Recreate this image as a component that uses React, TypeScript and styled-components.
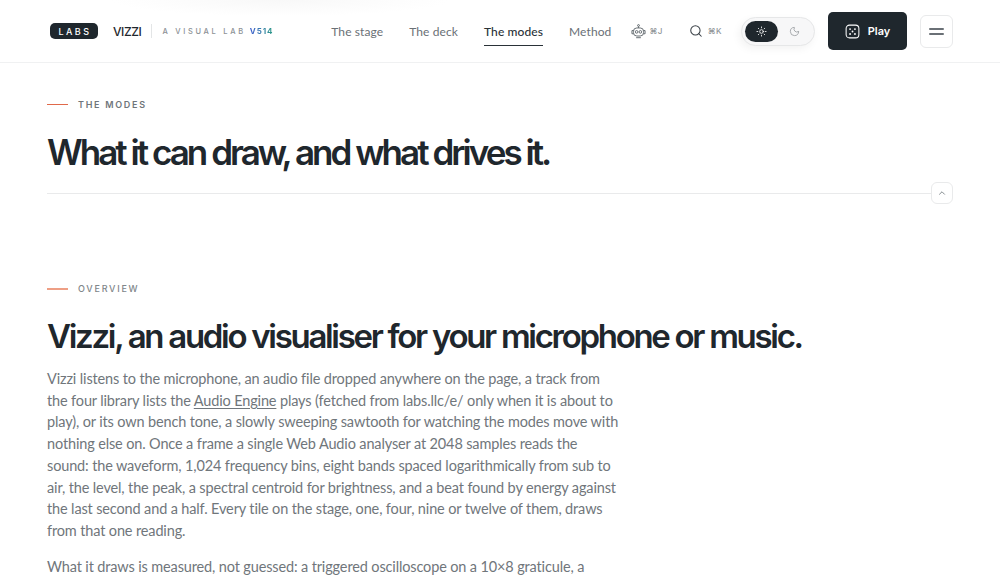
import styled, { createGlobalStyle } from "styled-components";
import { Search, Sun, Moon, ChevronUp } from "lucide-react";

const GlobalStyle = createGlobalStyle`
  * { box-sizing: border-box; }
  html, body { margin: 0; height: 100%; overflow: hidden; background: #fff; }
  body { font-family: Inter, "Liberation Sans", sans-serif; color: #1f272d; }
`;

const navItems = ["The stage", "The deck", "The modes", "Method"];

const BotIcon = () => (
  <svg width="15" height="15" viewBox="0 0 16 16" fill="none" stroke="#5f666c" strokeWidth="1">
    <circle cx="8" cy="1.6" r="1" />
    <path d="M8 2.6v1.6" />
    <rect x="2.6" y="4.2" width="10.8" height="8.6" rx="3.6" />
    <path d="M2.6 7H1v3.4h1.6M13.4 7H15v3.4h-1.6M5.5 14.6h5" />
    <circle cx="6" cy="8.4" r="1.4" />
    <circle cx="10" cy="8.4" r="1.4" />
  </svg>
);

const DiceIcon = () => (
  <svg width="15" height="15" viewBox="0 0 16 16" fill="none">
    <rect x="1.2" y="1.2" width="13.6" height="13.6" rx="3.6" stroke="#fff" strokeWidth="1.1" />
    <g fill="#fff">
      <circle cx="5.4" cy="5.4" r="1" />
      <circle cx="10.6" cy="5.4" r="1" />
      <circle cx="8" cy="8" r="1" />
      <circle cx="5.4" cy="10.6" r="1" />
      <circle cx="10.6" cy="10.6" r="1" />
    </g>
  </svg>
);

export default function App() {
  return (
    <>
      <GlobalStyle />
      <Page>
        <Header>
          <Brand>
            <LabsBadge>LABS</LabsBadge>
            <BrandName>VIZZI</BrandName>
            <BrandDivider />
            <Tagline>A VISUAL LAB</Tagline>
            <Version>V514</Version>
          </Brand>
          <Nav>
            {navItems.map((item) => (
              <NavLink key={item} $active={item === "The modes"}>
                {item}
              </NavLink>
            ))}
          </Nav>
          <Tools>
            <ToolHint>
              <BotIcon />
              <Kbd>⌘J</Kbd>
            </ToolHint>
            <SearchHint>
              <Search size={14} color="#3a4147" strokeWidth={1.8} />
              <Kbd>⌘K</Kbd>
            </SearchHint>
            <ThemeToggle>
              <ThemeKnob $on>
                <Sun size={11} color="#fff" strokeWidth={1.8} />
              </ThemeKnob>
              <ThemeKnob>
                <Moon size={11} color="#8d9296" strokeWidth={1.6} />
              </ThemeKnob>
            </ThemeToggle>
            <PlayButton>
              <DiceIcon />
              Play
            </PlayButton>
            <MenuButton aria-label="Menu">
              <MenuBar />
              <MenuBar />
            </MenuButton>
          </Tools>
        </Header>

        <Hero>
          <Eyebrow>
            <EyebrowRule />
            <EyebrowText $strong>THE MODES</EyebrowText>
          </Eyebrow>
          <PageTitle>What it can draw, and what drives it.</PageTitle>
          <HeroRule>
            <RuleLine />
            <CollapseButton aria-label="Collapse">
              <ChevronUp size={10} color="#7b8186" strokeWidth={2.2} />
            </CollapseButton>
          </HeroRule>
        </Hero>

        <Section>
          <Eyebrow>
            <EyebrowRule $soft />
            <EyebrowText>OVERVIEW</EyebrowText>
          </Eyebrow>
          <SectionTitle>Vizzi, an audio visualiser for your microphone or music.</SectionTitle>
          <Prose>
            Vizzi listens to the microphone, an audio file dropped anywhere on the page, a track from
            <br />
            the four library lists the <ProseLink>Audio Engine</ProseLink> plays (fetched from labs.llc/e/ only when it is about to
            <br />
            play), or its own bench tone, a slowly sweeping sawtooth for watching the modes move with
            <br />
            nothing else on. Once a frame a single Web Audio analyser at 2048 samples reads the
            <br />
            sound: the waveform, 1,024 frequency bins, eight bands spaced logarithmically from sub to
            <br />
            air, the level, the peak, a spectral centroid for brightness, and a beat found by energy against
            <br />
            the last second and a half. Every tile on the stage, one, four, nine or twelve of them, draws
            <br />
            from that one reading.
          </Prose>
          <Prose>What it draws is measured, not guessed: a triggered oscilloscope on a 10×8 graticule, a</Prose>
        </Section>
      </Page>
    </>
  );
}

const Page = styled.div`
  width: 1000px;
  height: 583px;
  overflow: hidden;
`;

const Header = styled.header`
  height: 63px;
  padding: 0 47px 0 50px;
  display: flex;
  align-items: center;
  border-bottom: 1px solid #f0f1f2;
  background: radial-gradient(ellipse 170px 16px at 280px 0, #f8f8f8, #fff);
`;

const Brand = styled.div`
  display: flex;
  align-items: center;
  width: 282px;
`;

const LabsBadge = styled.span`
  width: 48px;
  height: 16px;
  border-radius: 5px;
  background: #1f272d;
  color: #fff;
  font-size: 9px;
  font-weight: 500;
  letter-spacing: 2.4px;
  padding-left: 2px;
  display: flex;
  align-items: center;
  justify-content: center;
`;

const BrandName = styled.span`
  margin-left: 15px;
  font-size: 12px;
  font-weight: 500;
  letter-spacing: -0.4px;
`;

const BrandDivider = styled.span`
  width: 1px;
  height: 14px;
  margin: 0 10px 0 10px;
  background: #e3e5e6;
`;

const Tagline = styled.span`
  font-size: 7.5px;
  font-weight: 500;
  letter-spacing: 2.7px;
  color: #8c9195;
`;

const Version = styled.span`
  margin-left: 4px;
  font-size: 8px;
  font-weight: 700;
  letter-spacing: 0.9px;
  background: linear-gradient(90deg, #3f5fd0, #2b9a86);
  -webkit-background-clip: text;
  background-clip: text;
  color: transparent;
`;

const Nav = styled.nav`
  display: flex;
  gap: 26px;
  height: 30px;
  font-family: Lato, sans-serif;
`;

const NavLink = styled.a<{ $active?: boolean }>`
  display: flex;
  align-items: center;
  height: 100%;
  white-space: nowrap;
  font-size: 12px;
  letter-spacing: 0.1px;
  font-weight: ${(props) => (props.$active ? 500 : 400)};
  color: ${(props) => (props.$active ? "#2a3238" : "#6a7076")};
  border-bottom: 1px solid ${(props) => (props.$active ? "#2a3238" : "transparent")};
  padding-top: 1px;
`;

const Tools = styled.div`
  display: flex;
  align-items: center;
  margin-left: 20px;
`;

const ToolHint = styled.div`
  display: flex;
  align-items: center;
  gap: 3px;
`;

const SearchHint = styled(ToolHint)`
  margin-left: 26px;
  gap: 5px;
`;

const Kbd = styled.span`
  font-size: 8px;
  font-weight: 500;
  letter-spacing: 0.4px;
  color: #8f9498;
`;

const ThemeToggle = styled.div`
  width: 74px;
  height: 29px;
  margin-left: 19px;
  padding: 3px;
  display: flex;
  border: 1px solid #e6e7e8;
  border-radius: 15px;
  background: #f7f7f8;
  box-shadow: -2px 3px 8px rgba(0, 0, 0, 0.05);
`;

const ThemeKnob = styled.span<{ $on?: boolean }>`
  width: 33px;
  height: 21px;
  border-radius: 11px;
  display: flex;
  align-items: center;
  justify-content: center;
  background: ${(props) => (props.$on ? "#1f272d" : "transparent")};
`;

const PlayButton = styled.button`
  width: 79px;
  height: 38px;
  margin-left: 13px;
  padding-left: 6px;
  display: flex;
  align-items: center;
  justify-content: center;
  gap: 8px;
  border: none;
  border-radius: 5px;
  background: #1f272d;
  color: #fff;
  font-family: inherit;
  font-size: 11px;
  font-weight: 600;
`;

const MenuButton = styled.button`
  width: 33px;
  height: 33px;
  margin-left: 13px;
  display: flex;
  flex-direction: column;
  align-items: center;
  justify-content: center;
  gap: 3px;
  padding: 0;
  background: #fff;
  border: 1px solid #e9eaeb;
  border-radius: 6px;
`;

const MenuBar = styled.span`
  width: 15px;
  height: 2px;
  border-radius: 1px;
  background: #6a7076;
`;

const Hero = styled.section`
  padding: 36px 47px 0;
`;

const Eyebrow = styled.div`
  display: flex;
  align-items: center;
  gap: 10px;
`;

const EyebrowRule = styled.span<{ $soft?: boolean }>`
  width: 21px;
  height: ${(props) => (props.$soft ? 2 : 1)}px;
  background: ${(props) => (props.$soft ? "#ee9f85" : "#e0694a")};
`;

const EyebrowText = styled.span<{ $strong?: boolean }>`
  font-size: 9px;
  font-weight: ${(props) => (props.$strong ? 600 : 500)};
  letter-spacing: ${(props) => (props.$strong ? 1.7 : 1.75)}px;
  color: ${(props) => (props.$strong ? "#6f757a" : "#80868a")};
`;

const PageTitle = styled.h1`
  margin: 19px 0 0;
  font-size: 35px;
  line-height: 46px;
  font-weight: 600;
  letter-spacing: -2.97px;
  color: #1f272d;
`;

const HeroRule = styled.div`
  display: flex;
  align-items: center;
  margin-top: 7px;
`;

const RuleLine = styled.span`
  flex: 1;
  height: 1px;
  background: #e9eaeb;
`;

const CollapseButton = styled.button`
  width: 22px;
  height: 22px;
  display: flex;
  align-items: center;
  justify-content: center;
  padding: 0;
  background: #fff;
  border: 1px solid #e9eaeb;
  border-radius: 6px;
`;

const Section = styled.section`
  padding: 79px 47px 0;
`;

const SectionTitle = styled.h2`
  margin: 20px 0 0;
  font-size: 33px;
  line-height: 44px;
  font-weight: 600;
  letter-spacing: -2.3px;
  color: #1f272d;
`;

const Prose = styled.p`
  width: 600px;
  margin: 10px 0 0;
  font-family: Lato, sans-serif;
  font-size: 14.5px;
  line-height: 21.7px;
  letter-spacing: -0.14px;
  color: #70767b;
  & + & {
    margin-top: 14px;
  }
`;

const ProseLink = styled.a`
  text-decoration: underline;
  text-underline-offset: 2px;
`;
